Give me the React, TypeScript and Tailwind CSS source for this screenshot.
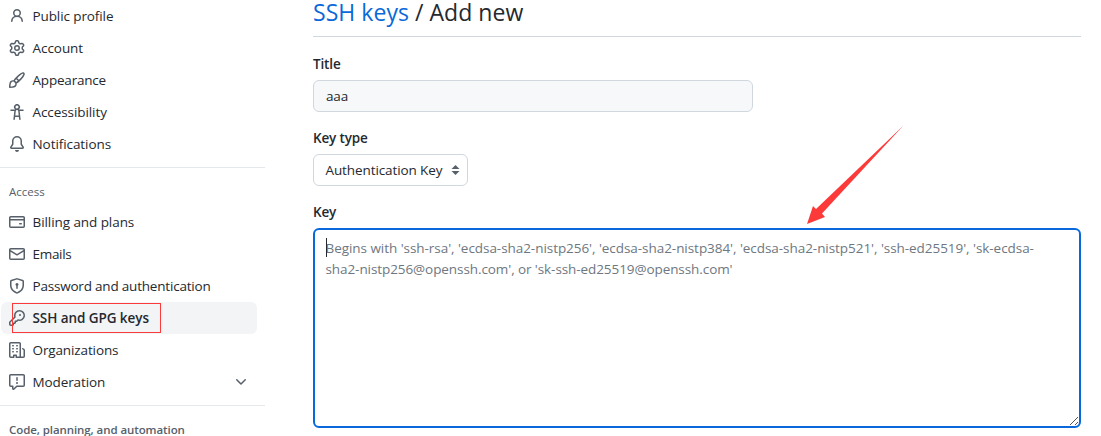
import React from "react";

const ICONS = {
  person:
    "M10.561 8.073a6.005 6.005 0 0 1 3.432 5.142.75.75 0 1 1-1.498.07 4.5 4.5 0 0 0-8.99 0 .75.75 0 0 1-1.498-.07 6.004 6.004 0 0 1 3.431-5.142 3.999 3.999 0 1 1 5.123 0ZM10.5 5a2.5 2.5 0 1 0-5 0 2.5 2.5 0 0 0 5 0Z",
  gear:
    "M8 0a8.2 8.2 0 0 1 .701.031C9.444.095 9.99.645 10.16 1.29l.288 1.107c.018.066.079.158.212.224.231.114.454.243.668.386.123.082.233.09.299.071l1.103-.303c.644-.176 1.392.021 1.82.63.27.385.506.792.704 1.218.315.675.111 1.422-.364 1.891l-.814.806c-.049.048-.098.147-.088.294.016.257.016.515 0 .772-.01.147.038.246.088.294l.814.806c.475.469.679 1.216.364 1.891a7.977 7.977 0 0 1-.704 1.217c-.428.61-1.176.807-1.82.63l-1.102-.302c-.067-.019-.177-.011-.3.071a5.909 5.909 0 0 1-.668.386c-.133.066-.194.158-.211.224l-.29 1.106c-.168.646-.715 1.196-1.458 1.26a8.006 8.006 0 0 1-1.402 0c-.743-.064-1.289-.614-1.458-1.26l-.289-1.106c-.018-.066-.079-.158-.212-.224a5.738 5.738 0 0 1-.668-.386c-.123-.082-.233-.09-.299-.071l-1.103.303c-.644.176-1.392-.021-1.82-.63a8.12 8.12 0 0 1-.704-1.218c-.315-.675-.111-1.422.363-1.891l.815-.806c.05-.048.098-.147.088-.294a6.214 6.214 0 0 1 0-.772c.01-.147-.038-.246-.088-.294l-.815-.806C.635 6.045.431 5.298.746 4.623a7.92 7.92 0 0 1 .704-1.217c.428-.61 1.176-.807 1.82-.63l1.102.302c.067.019.177.011.3-.071.214-.143.437-.272.668-.386.133-.066.194-.158.211-.224l.29-1.106C6.009.645 6.556.095 7.299.03 7.53.01 7.764 0 8 0Zm-.571 1.525c-.036.003-.108.036-.137.146l-.289 1.105c-.147.561-.549.967-.998 1.189-.173.086-.34.183-.5.29-.417.278-.97.423-1.529.27l-1.103-.303c-.109-.03-.175.016-.195.045-.22.312-.412.644-.573.99-.014.031-.021.11.059.19l.815.806c.411.406.562.957.53 1.456a4.709 4.709 0 0 0 0 .582c.032.499-.119 1.05-.53 1.456l-.815.806c-.081.08-.073.159-.059.19.162.346.353.677.573.989.02.03.085.076.195.046l1.102-.303c.56-.153 1.113-.008 1.53.27.161.107.328.204.501.29.447.222.85.629.997 1.189l.289 1.105c.029.109.101.143.137.146a6.6 6.6 0 0 0 1.142 0c.036-.003.108-.036.137-.146l.289-1.105c.147-.561.549-.967.998-1.189.173-.086.34-.183.5-.29.417-.278.97-.423 1.529-.27l1.103.303c.109.029.175-.016.195-.045.22-.313.411-.644.573-.99.014-.031.021-.11-.059-.19l-.815-.806c-.411-.406-.562-.957-.53-1.456a4.709 4.709 0 0 0 0-.582c-.032-.499.119-1.05.53-1.456l.815-.806c.081-.08.073-.159.059-.19a6.464 6.464 0 0 0-.573-.989c-.02-.03-.085-.076-.195-.046l-1.102.303c-.56.153-1.113.008-1.53-.27a4.44 4.44 0 0 0-.501-.29c-.447-.222-.85-.629-.997-1.189l-.289-1.105c-.029-.11-.101-.143-.137-.146a6.6 6.6 0 0 0-1.142 0ZM11 8a3 3 0 1 1-6 0 3 3 0 0 1 6 0ZM9.5 8a1.5 1.5 0 1 0-3.001.001A1.5 1.5 0 0 0 9.5 8Z",
  brush:
    "M11.134 1.535c.7-.509 1.416-.942 2.076-1.155.649-.21 1.463-.267 2.069.34.603.601.568 1.411.368 2.07-.202.668-.624 1.39-1.125 2.096-1.011 1.424-2.496 2.987-3.775 4.249-1.098 1.084-2.132 1.839-3.04 2.3a3.744 3.744 0 0 1-1.055 3.217c-.431.431-1.065.691-1.657.861-.614.177-1.294.287-1.914.357A21.151 21.151 0 0 1 .797 16H.743l.007-.75H.749L.742 16a.75.75 0 0 1-.743-.742l.743-.008-.742.007v-.054a21.25 21.25 0 0 1 .13-2.284c.067-.647.187-1.287.358-1.914.17-.591.43-1.226.86-1.657a3.746 3.746 0 0 1 3.227-1.054c.466-.893 1.225-1.907 2.314-2.982 1.271-1.255 2.833-2.75 4.246-3.757ZM1.62 13.089c-.051.464-.086.929-.104 1.395.466-.018.932-.053 1.396-.104a10.511 10.511 0 0 0 1.668-.309c.526-.151.856-.325 1.011-.48a2.25 2.25 0 1 0-3.182-3.182c-.155.155-.329.485-.48 1.01a10.515 10.515 0 0 0-.309 1.67Zm10.396-10.34c-1.224.89-2.605 2.189-3.822 3.384l1.718 1.718c1.21-1.205 2.51-2.597 3.387-3.833.47-.662.78-1.227.912-1.662.134-.444.032-.551.009-.575h-.001V1.78c-.014-.014-.113-.113-.548.027-.432.14-.995.462-1.655.942Zm-4.832 7.266-.001.001a9.859 9.859 0 0 0 1.63-1.142L7.155 7.216a9.7 9.7 0 0 0-1.161 1.607c.482.302.889.71 1.19 1.192Z",
  accessibility:
    "M9.923 5.302c.063.063.122.129.178.198H14A.75.75 0 0 1 14 7h-3.3l.578 5.163.362 2.997a.75.75 0 0 1-1.49.18L9.868 13H6.132l-.282 2.34a.75.75 0 0 1-1.49-.18l.362-2.997L5.3 7H2a.75.75 0 0 1 0-1.5h3.9a2.54 2.54 0 0 1 .176-.198 3 3 0 1 1 3.847 0ZM9.2 7.073h-.001a1.206 1.206 0 0 0-2.398 0L6.305 11.5h3.39ZM9.5 3a1.5 1.5 0 1 0-3.001.001A1.5 1.5 0 0 0 9.5 3Z",
  bell:
    "M8 16a2 2 0 0 0 1.985-1.75c.017-.137-.097-.25-.235-.25h-3.5c-.138 0-.252.113-.235.25A2 2 0 0 0 8 16ZM3 5a5 5 0 0 1 10 0v2.947c0 .05.015.098.042.139l1.703 2.555A1.519 1.519 0 0 1 13.482 13H2.518a1.516 1.516 0 0 1-1.263-2.36l1.703-2.554A.255.255 0 0 0 3 7.947Zm5-3.5A3.5 3.5 0 0 0 4.5 5v2.947c0 .346-.102.683-.294.97l-1.703 2.556a.017.017 0 0 0-.003.01l.001.006c0 .002.002.004.004.006l.006.004.007.001h10.964l.007-.001.006-.004.004-.006.001-.007a.017.017 0 0 0-.003-.01l-1.703-2.554a1.745 1.745 0 0 1-.294-.97V5A3.5 3.5 0 0 0 8 1.5Z",
  card:
    "M10.75 9a.75.75 0 0 0 0 1.5h1.5a.75.75 0 0 0 0-1.5h-1.5ZM0 3.75C0 2.784.784 2 1.75 2h12.5c.966 0 1.75.784 1.75 1.75v8.5A1.75 1.75 0 0 1 14.25 14H1.75A1.75 1.75 0 0 1 0 12.25ZM14.5 6.5h-13v5.75c0 .138.112.25.25.25h12.5a.25.25 0 0 0 .25-.25Zm0-2.75a.25.25 0 0 0-.25-.25H1.75a.25.25 0 0 0-.25.25V5h13Z",
  mail:
    "M1.75 2h12.5c.966 0 1.75.784 1.75 1.75v8.5A1.75 1.75 0 0 1 14.25 14H1.75A1.75 1.75 0 0 1 0 12.25v-8.5C0 2.784.784 2 1.75 2ZM1.5 12.251c0 .138.112.25.25.25h12.5a.25.25 0 0 0 .25-.25V5.809L8.38 9.397a.75.75 0 0 1-.76 0L1.5 5.809v6.442Zm13-8.181v-.32a.25.25 0 0 0-.25-.25H1.75a.25.25 0 0 0-.25.25v.32L8 7.88Z",
  shield:
    "m8.533.133 5.25 1.68A1.75 1.75 0 0 1 15 3.48V7c0 1.566-.32 3.182-1.303 4.682-.983 1.498-2.585 2.813-5.032 3.855a1.697 1.697 0 0 1-1.33 0c-2.447-1.042-4.049-2.357-5.032-3.855C1.32 10.182 1 8.566 1 7V3.48a1.75 1.75 0 0 1 1.217-1.667l5.25-1.68a1.748 1.748 0 0 1 1.066 0Zm-.61 1.429.001.001-5.25 1.68a.251.251 0 0 0-.174.237V7c0 1.36.275 2.666 1.057 3.859.784 1.194 2.121 2.342 4.366 3.298a.196.196 0 0 0 .154 0c2.245-.957 3.582-2.103 4.366-3.297C13.225 9.666 13.5 8.358 13.5 7V3.48a.25.25 0 0 0-.174-.238l-5.25-1.68a.25.25 0 0 0-.153 0ZM9.5 6.5c0 .536-.286 1.032-.75 1.3v2.45a.75.75 0 0 1-1.5 0V7.8A1.5 1.5 0 1 1 9.5 6.5Z",
  key:
    "M10.5 0a5.499 5.499 0 1 1-1.288 10.848l-.932.932a.749.749 0 0 1-.53.22H7v.75a.749.749 0 0 1-.22.53l-.5.5a.749.749 0 0 1-.53.22H5v.75a.749.749 0 0 1-.22.53l-.5.5a.749.749 0 0 1-.53.22h-2A1.75 1.75 0 0 1 0 14.25v-2c0-.199.079-.389.22-.53l4.932-4.932A5.5 5.5 0 0 1 10.5 0Zm-4 5.5c-.001.431.069.86.205 1.269a.75.75 0 0 1-.181.768L1.5 12.56v1.69c0 .138.112.25.25.25h1.69l.06-.06v-1.19a.75.75 0 0 1 .75-.75h1.19l.06-.06v-1.19a.75.75 0 0 1 .75-.75h1.19l1.023-1.025a.75.75 0 0 1 .768-.18A4 4 0 1 0 6.5 5.5ZM11 6a1 1 0 1 1 0-2 1 1 0 0 1 0 2Z",
  organization:
    "M1.75 16A1.75 1.75 0 0 1 0 14.25V1.75C0 .784.784 0 1.75 0h8.5C11.216 0 12 .784 12 1.75v12.5c0 .085-.006.168-.018.25h2.268a.25.25 0 0 0 .25-.25V8.285a.25.25 0 0 0-.111-.208l-1.055-.703a.749.749 0 1 1 .832-1.248l1.055.703c.487.325.779.871.779 1.456v5.965A1.75 1.75 0 0 1 14.25 16h-3.5a.766.766 0 0 1-.197-.026c-.099.017-.2.026-.303.026h-3a.75.75 0 0 1-.75-.75V14h-1v1.25a.75.75 0 0 1-.75.75Zm-.25-1.75c0 .138.112.25.25.25H4v-1.25a.75.75 0 0 1 .75-.75h2.5a.75.75 0 0 1 .75.75v1.25h2.25a.25.25 0 0 0 .25-.25V1.75a.25.25 0 0 0-.25-.25h-8.5a.25.25 0 0 0-.25.25ZM3.75 6h.5a.75.75 0 0 1 0 1.5h-.5a.75.75 0 0 1 0-1.5ZM3 3.75A.75.75 0 0 1 3.75 3h.5a.75.75 0 0 1 0 1.5h-.5A.75.75 0 0 1 3 3.75Zm4 3A.75.75 0 0 1 7.75 6h.5a.75.75 0 0 1 0 1.5h-.5A.75.75 0 0 1 7 6.75ZM7.75 3h.5a.75.75 0 0 1 0 1.5h-.5a.75.75 0 0 1 0-1.5ZM3 9.75A.75.75 0 0 1 3.75 9h.5a.75.75 0 0 1 0 1.5h-.5A.75.75 0 0 1 3 9.75ZM7.75 9h.5a.75.75 0 0 1 0 1.5h-.5a.75.75 0 0 1 0-1.5Z",
  report:
    "M0 1.75C0 .784.784 0 1.75 0h12.5C15.216 0 16 .784 16 1.75v9.5A1.75 1.75 0 0 1 14.25 13H8.06l-2.573 2.573A1.458 1.458 0 0 1 3 14.543V13H1.75A1.75 1.75 0 0 1 0 11.25Zm1.75-.25a.25.25 0 0 0-.25.25v9.5c0 .138.112.25.25.25h2a.75.75 0 0 1 .75.75v2.19l2.72-2.72a.749.749 0 0 1 .53-.22h6.5a.25.25 0 0 0 .25-.25v-9.5a.25.25 0 0 0-.25-.25Zm7 2.25v2.5a.75.75 0 0 1-1.5 0v-2.5a.75.75 0 0 1 1.5 0ZM9 9a1 1 0 1 1-2 0 1 1 0 0 1 2 0Z",
  chevron:
    "M12.78 5.22a.749.749 0 0 1 0 1.06l-4.25 4.25a.749.749 0 0 1-1.06 0L3.22 6.28a.749.749 0 1 1 1.06-1.06L8 8.939l3.72-3.719a.749.749 0 0 1 1.06 0Z",
};

type IconName = keyof typeof ICONS;

function Icon({ name }: { name: IconName }) {
  return (
    <svg viewBox="0 0 16 16" className="size-4 shrink-0 fill-[#57606a]" aria-hidden="true">
      <path d={ICONS[name]} />
    </svg>
  );
}

type Item = { icon: IconName; label: string; track: string; active?: boolean; more?: boolean };

const PERSONAL: Item[] = [
  { icon: "person", label: "Public profile", track: "tracking-[-0.1px]" },
  { icon: "gear", label: "Account", track: "tracking-[-0.05px]" },
  { icon: "brush", label: "Appearance", track: "tracking-[-0.2px]" },
  { icon: "accessibility", label: "Accessibility", track: "tracking-[-0.08px]" },
  { icon: "bell", label: "Notifications", track: "tracking-[-0.07px]" },
];

const ACCESS: Item[] = [
  { icon: "card", label: "Billing and plans", track: "tracking-[-0.07px]" },
  { icon: "mail", label: "Emails", track: "tracking-[-0.3px]" },
  { icon: "shield", label: "Password and authentication", track: "tracking-[-0.2px]" },
  { icon: "key", label: "SSH and GPG keys", track: "tracking-[-0.07px]", active: true },
  { icon: "organization", label: "Organizations", track: "tracking-[-0.12px]" },
  { icon: "report", label: "Moderation", track: "tracking-[-0.1px]", more: true },
];

function NavItem({ item }: { item: Item }) {
  return (
    <li
      className={
        item.active
          ? "relative flex h-8 items-center gap-[7.5px] rounded-md bg-[#f3f4f6] px-2 font-semibold"
          : "flex h-8 items-center gap-[7.5px] px-2"
      }
    >
      <Icon name={item.icon} />
      <span className={item.track}>{item.label}</span>
      {item.more && (
        <span className="ml-auto flex">
          <Icon name="chevron" />
        </span>
      )}
      {item.active && (
        <span className="absolute top-px left-[11px] h-[30px] w-[149px] border border-[#fb3b3b]" />
      )}
    </li>
  );
}

export default function App() {
  return (
    <div className="relative flex h-[436px] w-[1101px] overflow-hidden bg-white font-['Open_Sans','Noto_Sans',sans-serif] text-[13.5px] leading-5 text-[#24292f]">
      <nav className="w-[265px] shrink-0">
        <ul className="mr-2 ml-px">
          {PERSONAL.map((i) => (
            <NavItem key={i.label} item={i} />
          ))}
        </ul>
        <hr className="mt-[7px] border-[#e6e9ec]" />
        <h3 className="mt-[15px] ml-[9px] h-[18px] text-[11.5px] leading-[18px] font-medium text-[#57606a]">
          <span>Access</span>
        </h3>
        <ul className="mt-[5px] mr-2 ml-px">
          {ACCESS.map((i) => (
            <NavItem key={i.label} item={i} />
          ))}
        </ul>
        <hr className="mt-[7px] border-[#e6e9ec]" />
        <h3 className="mt-[15px] ml-[9px] text-[11.5px] leading-[18px] font-semibold tracking-[-0.08px] whitespace-nowrap text-[#57606a]">
          <span>Code, planning, and automation</span>
        </h3>
      </nav>

      <main className="ml-12 w-[768px]">
        <h2 className="h-[37px] border-b border-[#d0d7de] text-[23px] leading-6 tracking-[0.04px] whitespace-nowrap">
          <a className="text-[#0969da]">SSH keys</a>
          <span> / Add new</span>
        </h2>
        <div className="mt-[17px] font-semibold tracking-[-0.15px]">
          <span>Title</span>
        </div>
        <div className="mt-1.5 flex h-8 w-[440px] items-center rounded-md border border-[#d0d7de] bg-[#f6f8fa] px-3">
          <span className="tracking-[-0.15px]">aaa</span>
        </div>
        <div className="mt-4 font-semibold tracking-[-0.15px]">
          <span>Key type</span>
        </div>
        <div className="mt-1.5 flex h-8 w-[155px] items-center justify-between rounded-md border border-[#d0d7de] pr-[7px] pl-[11.5px] whitespace-nowrap">
          <span className="tracking-[-0.1px]">Authentication Key</span>
          <svg viewBox="0 0 9 10" className="h-2.5 w-[9px] fill-[#57606a]">
            <path d="M4.5 0 8.5 4H.5ZM.5 6h8l-4 4Z" />
          </svg>
        </div>
        <div className="mt-4 font-semibold tracking-[-0.15px]">
          <span>Key</span>
        </div>
        <div className="relative mt-1.5 h-[200px] rounded-md border-2 border-[#0969da] pt-2 pl-[10.5px] leading-[21px] tracking-[-0.05px] whitespace-nowrap text-[#6e7781]">
          <div>
            <span>
              Begins with 'ssh-rsa', 'ecdsa-sha2-nistp256', 'ecdsa-sha2-nistp384', 'ecdsa-sha2-nistp521', 'ssh-ed25519', 'sk-ecdsa-
            </span>
          </div>
          <div className="tracking-[-0.08px]">
            <span>sha2-nistp256@openssh.com', or 'sk-ssh-ed25519@openssh.com'</span>
          </div>
          <span className="absolute top-2 left-[11px] h-[19px] w-px bg-[#24292f]" />
          <svg viewBox="0 0 10 10" className="absolute right-0 bottom-0 size-2.5 fill-none stroke-[#555]">
            <path d="M1 9 9 1M6 9 9 6" />
          </svg>
        </div>
      </main>

      <svg viewBox="0 0 100 102" className="absolute top-[124px] left-[805px] h-[102px] w-[100px] fill-[#fd3a3a]">
        <path d="M98.5 1.5 17 89.5 20 93 2 100 8 82 11 85Z" />
      </svg>
    </div>
  );
}
